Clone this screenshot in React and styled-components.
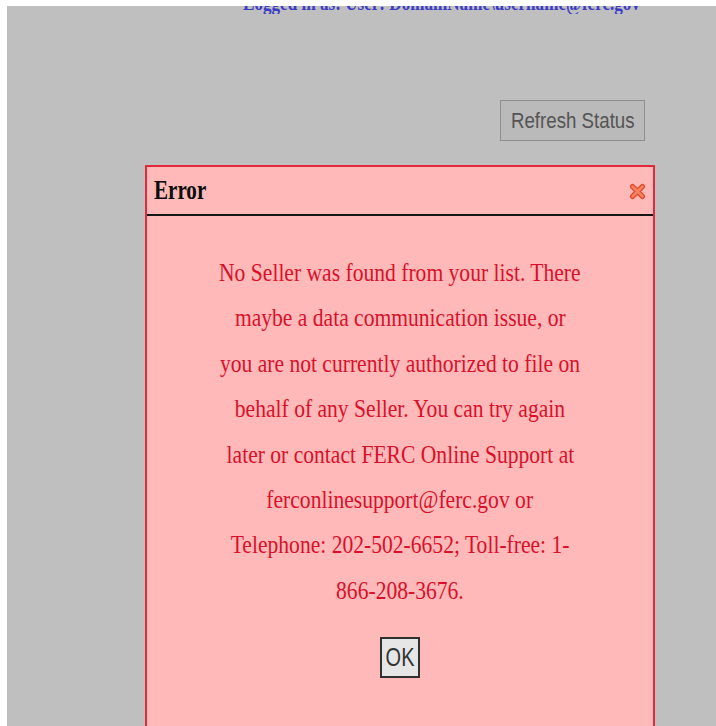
import React from "react";
import styled, { createGlobalStyle } from "styled-components";

const GlobalStyle = createGlobalStyle`
  html, body {
    margin: 0;
    padding: 0;
    background: #ffffff;
  }
  body {
    font-family: "Liberation Serif", "Times New Roman", serif;
  }
`;

const Page = styled.div`
  margin: 6px 0 0 7px;
  min-height: 720px;
  background: #bfbfbf;
  display: flex;
  flex-direction: column;
  overflow: hidden;
`;

const LoginBar = styled.div`
  height: 8px;
  overflow: hidden;
  padding-left: 236px;
`;

const LoginText = styled.div`
  margin-top: -13px;
  font-size: 20px;
  line-height: 20px;
  font-weight: bold;
  color: #3c3cc4;
  white-space: nowrap;
  transform: scaleX(0.855);
  transform-origin: left center;
`;

const Toolbar = styled.div`
  display: flex;
  justify-content: flex-end;
  margin-top: 86px;
  padding-right: 71px;
`;

const RefreshButton = styled.button`
  width: 145px;
  height: 41px;
  box-sizing: border-box;
  border: 1px solid #8e8e8e;
  background: #bababa;
  color: #545454;
  font-family: "Liberation Sans", Arial, sans-serif;
  font-size: 22px;
  padding: 0;
  display: flex;
  align-items: center;
  justify-content: center;
`;

const Squeezed = styled.span`
  display: inline-block;
  white-space: nowrap;
  transform: scaleX(${(p) => p.$x || 0.83});
  transform-origin: ${(p) => p.$origin || "center"} center;
`;

const Dialog = styled.div`
  margin: 24px 0 0 138px;
  width: 510px;
  box-sizing: border-box;
  border: 2px solid #e2283a;
  border-bottom: none;
  background: #ffb9b9;
  flex: 1;
  display: flex;
  flex-direction: column;
`;

const DialogHeader = styled.div`
  height: 47px;
  border-bottom: 2px solid #161616;
  display: flex;
  align-items: center;
  justify-content: space-between;
  padding: 0 7px 0 7px;
`;

const Title = styled.div`
  font-size: 27px;
  font-weight: bold;
  color: #0d0d0d;
`;

const CloseIcon = styled.svg`
  width: 17px;
  height: 17px;
  margin-right: 0;
  margin-top: 2px;
`;

const DialogBody = styled.div`
  padding: 34px 0 0 0;
  display: flex;
  flex-direction: column;
  align-items: center;
`;

const MessageLine = styled.div`
  font-size: 26px;
  line-height: 45.4px;
  color: #d9102a;
  text-align: center;
  width: 100%;
`;

const OkButton = styled.button`
  margin-top: 24px;
  width: 40px;
  height: 41px;
  box-sizing: border-box;
  border: 2px solid #303030;
  background: #e6e6e6;
  color: #333333;
  font-family: "Liberation Sans", Arial, sans-serif;
  font-size: 25px;
  padding: 0;
  display: flex;
  align-items: center;
  justify-content: center;
`;

const lines = [
  "No Seller was found from your list. There",
  "maybe a data communication issue, or",
  "you are not currently authorized to file on",
  "behalf of any Seller. You can try again",
  "later or contact FERC Online Support at",
  "ferconlinesupport@ferc.gov or",
  "Telephone: 202-502-6652; Toll-free: 1-",
  "866-208-3676.",
];

export default function App() {
  return (
    <>
      <GlobalStyle />
      <Page>
        <LoginBar>
          <LoginText>Logged in as: User: DomainName\username@ferc.gov</LoginText>
        </LoginBar>
        <Toolbar>
          <RefreshButton>
            <Squeezed $x={0.85}>Refresh Status</Squeezed>
          </RefreshButton>
        </Toolbar>
        <Dialog>
          <DialogHeader>
            <Title>
              <Squeezed $x={0.78} $origin="left">Error</Squeezed>
            </Title>
            <CloseIcon viewBox="0 0 16 16">
              <path
                d="M3.4 3.4 L12.6 12.6 M12.6 3.4 L3.4 12.6"
                stroke="#e24b2c"
                strokeWidth="5"
                strokeLinecap="round"
              />
              <path
                d="M3.4 3.4 L12.6 12.6 M12.6 3.4 L3.4 12.6"
                stroke="#f7845f"
                strokeWidth="2.6"
                strokeLinecap="round"
              />
            </CloseIcon>
          </DialogHeader>
          <DialogBody>
            {lines.map((line) => (
              <MessageLine key={line}>
                <Squeezed>{line}</Squeezed>
              </MessageLine>
            ))}
            <OkButton>
              <Squeezed $x={0.8}>OK</Squeezed>
            </OkButton>
          </DialogBody>
        </Dialog>
      </Page>
    </>
  );
}
